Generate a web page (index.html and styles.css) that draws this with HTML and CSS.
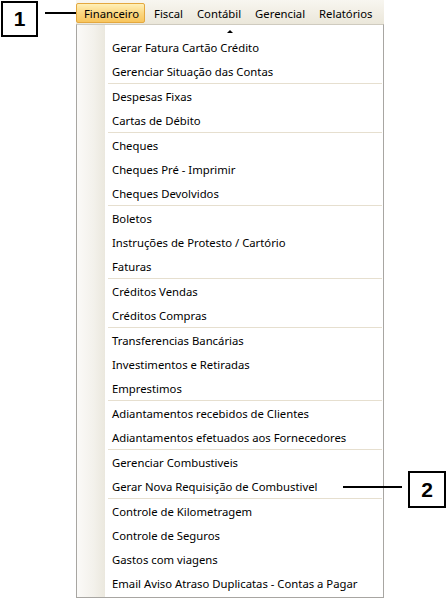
FILE: index.html
```html
<!DOCTYPE html>
<html lang="pt">
<head>
<meta charset="utf-8">
<link rel="stylesheet" href="styles.css">
</head>
<body>
<div class="screen">
  <div class="menubar">
    <span class="mb-item active">Financeiro</span>
    <span class="mb-item">Fiscal</span>
    <span class="mb-item">Contábil</span>
    <span class="mb-item">Gerencial</span>
    <span class="mb-item">Relatórios</span>
  </div>
  <div class="dropdown">
    <div class="gutter"></div>
    <div class="list">
      <div class="scroll-up"><span class="tri"></span></div>
      <div class="item">Gerar Fatura Cartão Crédito</div>
      <div class="item">Gerenciar Situação das Contas</div>
      <div class="sep"></div>
      <div class="item">Despesas Fixas</div>
      <div class="item">Cartas de Débito</div>
      <div class="sep"></div>
      <div class="item">Cheques</div>
      <div class="item">Cheques Pré - Imprimir</div>
      <div class="item">Cheques Devolvidos</div>
      <div class="sep"></div>
      <div class="item">Boletos</div>
      <div class="item">Instruções de Protesto / Cartório</div>
      <div class="item">Faturas</div>
      <div class="sep"></div>
      <div class="item">Créditos Vendas</div>
      <div class="item">Créditos Compras</div>
      <div class="sep"></div>
      <div class="item">Transferencias Bancárias</div>
      <div class="item">Investimentos e Retiradas</div>
      <div class="item">Emprestimos</div>
      <div class="sep"></div>
      <div class="item">Adiantamentos recebidos de Clientes</div>
      <div class="item">Adiantamentos efetuados aos Fornecedores</div>
      <div class="sep"></div>
      <div class="item">Gerenciar Combustiveis</div>
      <div class="item">Gerar Nova Requisição de Combustivel</div>
      <div class="sep"></div>
      <div class="item">Controle de Kilometragem</div>
      <div class="item">Controle de Seguros</div>
      <div class="item">Gastos com viagens</div>
      <div class="item">Email Aviso Atraso Duplicatas - Contas a Pagar</div>
    </div>
  </div>

  <div class="callout callout-1">1</div>
  <div class="leader leader-1"></div>
  <div class="callout callout-2">2</div>
  <div class="leader leader-2"></div>
</div>
</body>
</html>
```

FILE: styles.css
```css
html, body {
  margin: 0;
  padding: 0;
  background: #ffffff;
}

.screen {
  position: relative;
  width: 447px;
  height: 598px;
  overflow: hidden;
  font-family: "Noto Sans", "Open Sans", sans-serif;
  font-size: 11.3px;
  color: #000;
}

.menubar {
  margin-left: 76px;
  width: 308px;
  height: 24px;
  box-sizing: border-box;
  padding-top: 3px;
  display: flex;
  align-items: flex-start;
  background: linear-gradient(#f8f6f0, #ebe7da);
}

.mb-item {
  height: 20px;
  line-height: 19px;
  padding: 0 6px;
  box-sizing: border-box;
  border: 1px solid transparent;
  border-radius: 2px;
  white-space: nowrap;
}

.mb-item.active {
  padding-left: 7px;
  padding-right: 5px;
  border-color: #e4a83f;
  background: linear-gradient(#fff0b8, #fbd781 50%, #f8c55d);
}

.mb-item.active + .mb-item {
  padding-left: 8px;
}

.dropdown {
  margin-left: 76px;
  width: 308px;
  height: 574px;
  box-sizing: border-box;
  border: 1px solid #a8a6a2;
  border-top-color: #cfcbbf;
  display: flex;
  background: #fff;
}

.gutter {
  width: 28px;
  flex: none;
  background: linear-gradient(to right, #fbfaf8, #f3f1eb 60%, #ebe8de);
}

.list {
  flex: 1;
  display: flex;
  flex-direction: column;
}

.scroll-up {
  height: 10px;
  display: flex;
  justify-content: center;
  align-items: flex-end;
  margin-left: -28px;
}

.tri {
  width: 0;
  height: 0;
  border-left: 3px solid transparent;
  border-right: 3px solid transparent;
  border-bottom: 3px solid #000;
  margin-bottom: 2px;
}

.item {
  height: 24px;
  line-height: 25px;
  padding-left: 7px;
  white-space: nowrap;
}

.sep {
  height: 1px;
  margin-left: 3px;
  margin-right: 1px;
  background: #e6dfcf;
}

.callout {
  position: absolute;
  box-sizing: border-box;
  border: 2px solid #000;
  background: #fff;
  font-family: "Liberation Sans", Arial, sans-serif;
  font-weight: bold;
  font-size: 21px;
  display: flex;
  align-items: center;
  justify-content: center;
}

.callout-1 {
  left: 1px;
  top: 1px;
  width: 37px;
  height: 36px;
}

.callout-2 {
  left: 408px;
  top: 471px;
  width: 38px;
  height: 37px;
}

.leader {
  position: absolute;
  height: 2px;
  background: #000;
}

.leader-1 {
  left: 45px;
  top: 12px;
  width: 31px;
}

.leader-2 {
  left: 343px;
  top: 486px;
  width: 59px;
}
```
